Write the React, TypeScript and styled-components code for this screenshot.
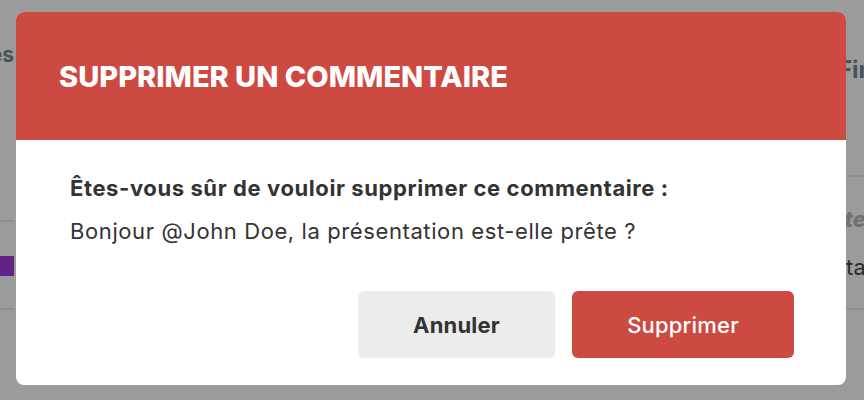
import React from "react";
import styled, { createGlobalStyle } from "styled-components";

const Global = createGlobalStyle`
  html, body { margin: 0; padding: 0; }
  body {
    width: 864px;
    height: 400px;
    overflow: hidden;
    background: #9b9b9b;
    font-family: Inter, "Open Sans", sans-serif;
  }
`;

const Page = styled.div`
  position: relative;
  width: 864px;
  height: 400px;
  display: flex;
  justify-content: space-between;
  background: #9b9b9b;
  overflow: hidden;
`;

const Strip = styled.div<{ $width: number }>`
  width: ${(p) => p.$width}px;
  display: flex;
  flex-direction: column;
`;

const HeadingSlot = styled.div<{ $top: number; $end?: boolean }>`
  margin-top: ${(p) => p.$top}px;
  display: flex;
  justify-content: ${(p) => (p.$end ? "flex-end" : "flex-start")};
`;

const BgHeading = styled.div<{ $size: number }>`
  font-size: ${(p) => p.$size}px;
  font-weight: 700;
  color: #46525c;
  line-height: 28px;
  white-space: nowrap;
`;

const BgRule = styled.div<{ $top: number }>`
  margin-top: ${(p) => p.$top}px;
  margin-left: -40px;
  height: 2px;
  background: #8f8f8f;
`;

const BgBar = styled.div<{ $top: number }>`
  margin-top: ${(p) => p.$top}px;
  height: 20px;
  background: #5f2486;
`;

const BgText = styled.div<{ $top: number; $shift: number; $italic?: boolean }>`
  margin-top: ${(p) => p.$top}px;
  margin-left: ${(p) => p.$shift}px;
  font-size: 22px;
  line-height: 26px;
  white-space: nowrap;
  color: ${(p) => (p.$italic ? "#707070" : "#2b2b2b")};
  font-style: ${(p) => (p.$italic ? "italic" : "normal")};
  font-weight: ${(p) => (p.$italic ? 800 : 400)};
`;

const Modal = styled.div`
  position: absolute;
  left: 16px;
  top: 12px;
  width: 830px;
  height: 373px;
  background: #ffffff;
  border-radius: 8px;
  overflow: hidden;
  display: flex;
  flex-direction: column;
`;

const Header = styled.div`
  height: 128px;
  background: #cd4a42;
  display: flex;
  align-items: center;
  padding: 0 43px;
  box-sizing: border-box;
`;

const Title = styled.h1`
  margin: 0;
  font-size: 29px;
  font-weight: 800;
  color: #ffffff;
  letter-spacing: 0px;
  text-transform: uppercase;
`;

const Body = styled.div`
  padding: 34px 54px 0;
  display: flex;
  flex-direction: column;
  gap: 15px;
  flex: 1;
`;

const Question = styled.p`
  margin: 0;
  font-size: 22px;
  line-height: 28px;
  letter-spacing: 0.6px;
  font-weight: 700;
  color: #333333;
`;

const Comment = styled.p`
  margin: 0;
  font-size: 22px;
  line-height: 28px;
  letter-spacing: 0.6px;
  font-weight: 400;
  color: #333333;
`;

const Actions = styled.div`
  display: flex;
  justify-content: flex-end;
  gap: 17px;
  padding: 0 52px 27px 0;
  margin-top: auto;
`;

const Button = styled.button<{ $variant: "neutral" | "danger"; $width: number }>`
  width: ${(p) => p.$width}px;
  height: 67px;
  border: none;
  border-radius: 6px;
  font-family: inherit;
  font-size: 22px;
  letter-spacing: 0.2px;
  cursor: pointer;
  background: ${(p) => (p.$variant === "danger" ? "#cd4a42" : "#ececec")};
  color: ${(p) => (p.$variant === "danger" ? "#ffffff" : "#333333")};
  font-weight: ${(p) => (p.$variant === "danger" ? 500 : 700)};
`;

export default function App() {
  return (
    <>
      <Global />
      <Page>
        <Strip $width={14}>
          <HeadingSlot $top={41} $end>
            <BgHeading $size={21}>Sources</BgHeading>
          </HeadingSlot>
          <BgRule $top={151} />
          <BgBar $top={34} />
          <BgRule $top={32} />
        </Strip>
        <Strip $width={26}>
          <HeadingSlot $top={56}>
            <BgHeading $size={24}>First</BgHeading>
          </HeadingSlot>
          <BgRule $top={91} />
          <BgText $top={29} $shift={-24} $italic>Note</BgText>
          <BgText $top={22} $shift={-6}>Statut</BgText>
          <BgRule $top={28} />
        </Strip>
        <Modal>
          <Header>
            <Title>Supprimer un commentaire</Title>
          </Header>
          <Body>
            <Question>Êtes-vous sûr de vouloir supprimer ce commentaire :</Question>
            <Comment>Bonjour @John Doe, la présentation est-elle prête ?</Comment>
          </Body>
          <Actions>
            <Button $variant="neutral" $width={197}>Annuler</Button>
            <Button $variant="danger" $width={222}>Supprimer</Button>
          </Actions>
        </Modal>
      </Page>
    </>
  );
}
